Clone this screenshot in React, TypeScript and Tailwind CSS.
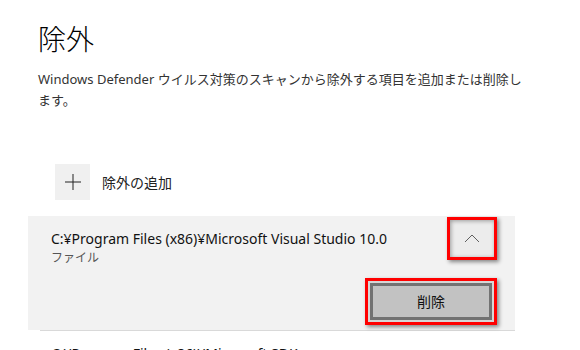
import { useState } from "react";

const font = {
  fontFamily: '"Noto Sans", "Noto Sans CJK JP", sans-serif',
};

function Chevron({ up }: { up?: boolean }) {
  return (
    <svg width="16" height="9" viewBox="0 0 16 9" fill="none">
      <path
        d={up ? "M1 8L8 1L15 8" : "M1 1L8 8L15 1"}
        stroke="#5f5f5f"
        strokeWidth="1"
      />
    </svg>
  );
}

export default function App() {
  const [open, setOpen] = useState(true);

  return (
    <main
      className="w-[580px] h-[350px] overflow-hidden bg-white pl-[38px] pt-[21px] text-[#1a1a1a]"
      style={font}
    >
      <h1 className="text-[28px] leading-[36px] font-light text-black">除外</h1>

      <p className="mt-[12px] w-[496px] text-[13px] leading-[21px] text-[#333]">
        Windows Defender ウイルス対策のスキャンから除外する項目を追加または削除します。
      </p>

      <div className="mt-[53px] ml-[17px] flex items-center gap-3">
        <button className="w-[35px] h-[36px] bg-[#f0f0f0] flex items-center justify-center">
          <svg width="16" height="16" viewBox="0 0 16 16">
            <path d="M8 0V16M0 8H16" stroke="#222" strokeWidth="1" />
          </svg>
        </button>
        <span className="text-[14px] text-[#222]">除外の追加</span>
      </div>

      <div className="mt-[16px] -ml-[10px] w-[487px]">
        <div className="bg-[#f2f2f2] pl-[23px] pr-[18px] pt-[1px] pb-[5px]">
          <div className="flex items-start justify-between">
            <div className="pt-[12px]">
              <div className="text-[14px] leading-[20px] text-[#111]">
                C:¥Program Files (x86)¥Microsoft Visual Studio 10.0
              </div>
              <div className="text-[12px] leading-[16px] text-[#555] mt-[1px]">ファイル</div>
            </div>
            <button
              onClick={() => setOpen(!open)}
              className="w-[50px] h-[43px] border-[3px] border-[#ff0000] bg-[#ececec] shadow-[2px_2px_4px_rgba(0,0,0,0.45),inset_1px_1px_4px_rgba(0,0,0,0.35)] flex items-center justify-center"
            >
              <Chevron up={open} />
            </button>
          </div>
          <div className="mt-[12px] flex justify-end">
            <div className="w-[132px] h-[47px] border-[3px] border-[#ff0000] bg-[#d6d6d6] p-[2px] shadow-[2px_2px_4px_rgba(0,0,0,0.45)]">
              <button className="w-full h-full border-[3px] border-[#727272] bg-[#c2c2c2] text-[14px] text-[#111] flex items-center justify-center">
                削除
              </button>
            </div>
          </div>
        </div>
        <div className="ml-[12px] h-px bg-[#d9d9d9]" />
        <div className="flex items-start justify-between pl-[23px] pr-[26px] pt-[13px]">
          <div className="text-[14px] leading-[20px] text-[#111]">
            C:¥Program Files (x86)¥Microsoft SDKs
          </div>
          <div className="pt-[6px] pr-[8px]">
            <Chevron />
          </div>
        </div>
      </div>
    </main>
  );
}
